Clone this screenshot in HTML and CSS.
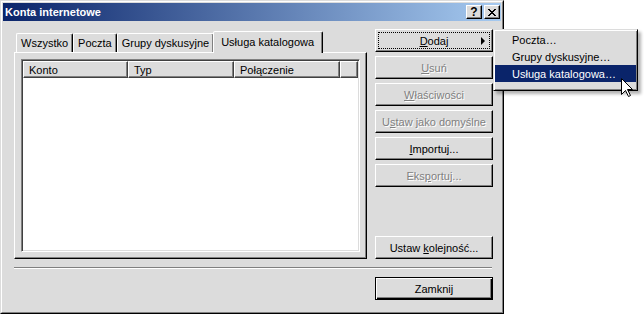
FILE: index.html
```html
<!DOCTYPE html>
<html lang="pl">
<head>
  <meta charset="UTF-8">
  <title>Konta internetowe</title>
  <link rel="stylesheet" href="styles.css">
</head>
<body>
  <div class="desk">
    <div class="window">
      <div class="frame">
        <div class="titlebar">
          <span class="title">Konta internetowe</span>
          <div class="caption-btns">
            <button class="cap-btn help">?</button>
            <button class="cap-btn">
              <svg width="8" height="7" viewBox="0 0 8 7" shape-rendering="crispEdges">
                <path d="M0 0h2v1H0z M6 0h2v1H6z M1 1h2v1H1z M5 1h2v1H5z M2 2h4v1H2z M3 3h2v1H3z M2 4h4v1H2z M1 5h2v1H1z M5 5h2v1H5z M0 6h2v1H0z M6 6h2v1H6z" fill="#000"/>
              </svg>
            </button>
          </div>
        </div>

        <div class="client">
          <div class="main-row">
            <div class="left-col">
              <div class="tabs">
                <div class="tab">Wszystko</div>
                <div class="tab">Poczta</div>
                <div class="tab">Grupy dyskusyjne</div>
                <div class="tab active">Usługa katalogowa</div>
              </div>
              <div class="panel">
                <div class="listview">
                  <div class="lv-header">
                    <div class="col col-konto">Konto</div>
                    <div class="col col-typ">Typ</div>
                    <div class="col col-conn">Połączenie</div>
                    <div class="col col-fill"></div>
                  </div>
                  <div class="lv-body"></div>
                </div>
              </div>
            </div>

            <div class="right-col">
              <button class="btn focused"><span><u>D</u>odaj</span><span class="arrow"></span></button>
              <button class="btn" disabled><span><u>U</u>suń</span></button>
              <button class="btn" disabled><span><u>W</u>łaściwości</span></button>
              <button class="btn" disabled><span>U<u>s</u>taw jako domyślne</span></button>
              <button class="btn"><span><u>I</u>mportuj...</span></button>
              <button class="btn" disabled><span>Eks<u>p</u>ortuj...</span></button>
              <button class="btn last"><span>Ustaw <u>k</u>olejność...</span></button>
            </div>
          </div>

          <div class="separator"></div>

          <div class="bottom-row">
            <button class="btn default"><span>Zamknij</span></button>
          </div>
        </div>
      </div>
    </div>

    <!-- submenu of "Dodaj" -->
    <div class="menu">
      <div class="menu-item">Poczta…</div>
      <div class="menu-item">Grupy dyskusyjne…</div>
      <div class="menu-item active">Usługa katalogowa…</div>
    </div>

    <svg class="cursor" width="13" height="20" viewBox="0 0 13 20">
      <path d="M0.5 0.5 L0.5 16.5 L4.5 12.5 L7.5 18.5 L9.5 17.5 L6.5 11.5 L11.5 11.5 Z" fill="#fff" stroke="#000" stroke-width="1"/>
    </svg>
  </div>
</body>
</html>
```

FILE: styles.css
```css
body {
  margin: 0;
  background: #fff;
  font-family: "Liberation Sans", Arial, sans-serif;
  font-size: 11px;
  color: #000;
}
.desk {
  position: relative;
  width: 644px;
  height: 314px;
}
.window {
  width: 504px;
  height: 314px;
  box-sizing: border-box;
  border: 1px solid;
  border-color: #dcdcdc #000 #000 #dcdcdc;
  background: #dcdcdc;
}
.frame {
  height: 100%;
  box-sizing: border-box;
  border: 1px solid;
  border-color: #fff #808080 #808080 #fff;
  padding: 1px;
  display: flex;
  flex-direction: column;
}

/* title bar */
.titlebar {
  height: 18px;
  display: flex;
  align-items: center;
  padding: 0 1px 0 2px;
  background: linear-gradient(to right, #0a246a, #a6caf0);
  color: #fff;
  font-weight: bold;
}
.caption-btns {
  margin-left: auto;
  display: flex;
  gap: 2px;
}
.cap-btn {
  width: 16px;
  height: 14px;
  box-sizing: border-box;
  padding: 0;
  border: 1px solid;
  border-color: #fff #000 #000 #fff;
  box-shadow: inset -1px -1px #808080;
  background: #dcdcdc;
  display: flex;
  align-items: center;
  justify-content: center;
}
.cap-btn.help {
  font: bold 12px "Liberation Sans", Arial, sans-serif;
  color: #000;
  line-height: 12px;
}

/* client area */
.client {
  flex: 1;
  display: flex;
  flex-direction: column;
  margin-top: 1px;
  padding: 7px 8px 0 11px;
}
.main-row {
  display: flex;
  gap: 8px;
  height: 230px;
}
.left-col {
  flex: 1;
  display: flex;
  flex-direction: column;
}

/* tabs */
.tabs {
  display: flex;
  align-items: flex-end;
  height: 23px;
  padding-left: 2px;
}
.tab {
  height: 19px;
  box-sizing: border-box;
  padding: 0 4px;
  border: 1px solid;
  border-bottom: none;
  border-color: #fff #000 transparent #fff;
  border-radius: 2px 2px 0 0;
  box-shadow: inset -1px 0 #808080;
  display: flex;
  align-items: center;
  white-space: nowrap;
}
.tab.active {
  position: relative;
  z-index: 1;
  height: 22px;
  margin: 0 -2px -1px -1px;
  padding: 0 8px 2px 7px;
  background: #dcdcdc;
}

.panel {
  flex: 1;
  display: flex;
  box-sizing: border-box;
  border: 1px solid;
  border-color: #fff #000 #000 #fff;
  box-shadow: inset -1px -1px #808080;
  padding: 6px;
}

/* list view */
.listview {
  flex: 1;
  display: flex;
  flex-direction: column;
  border: 1px solid;
  border-color: #808080 #fff #fff #808080;
  box-shadow: inset 1px 1px #404040, inset -1px -1px #dcdcdc;
  padding: 1px;
  background: #fff;
}
.lv-header {
  display: flex;
  height: 17px;
}
.col {
  box-sizing: border-box;
  border: 1px solid;
  border-color: #fff #404040 #404040 #fff;
  box-shadow: inset -1px -1px #808080;
  background: #dcdcdc;
  padding: 0 5px;
  display: flex;
  align-items: center;
  white-space: nowrap;
}
.col-konto { width: 105px; }
.col-typ { width: 106px; }
.col-conn { width: 106px; }
.col-fill { flex: 1; }
.lv-body {
  flex: 1;
}

/* buttons */
.right-col {
  width: 118px;
  display: flex;
  flex-direction: column;
  gap: 4px;
}
.btn {
  height: 23px;
  box-sizing: border-box;
  padding: 0;
  font: 11px "Liberation Sans", Arial, sans-serif;
  color: #000;
  background: #dcdcdc;
  border: 1px solid;
  border-color: #fff #000 #000 #fff;
  box-shadow: inset -1px -1px #808080;
  display: flex;
  align-items: center;
  justify-content: center;
  position: relative;
  white-space: nowrap;
}
.btn:disabled {
  color: #808080;
  text-shadow: 1px 1px #fff;
}
.btn.focused {
  outline: 1px dotted #000;
  outline-offset: -4px;
}
.btn .arrow {
  position: absolute;
  right: 7px;
  top: 7px;
  width: 0;
  height: 0;
  border-top: 4px solid transparent;
  border-bottom: 4px solid transparent;
  border-left: 4px solid #000;
}
.btn.last {
  margin-top: auto;
}
.btn.default {
  width: 118px;
  border-color: #000;
  box-shadow: inset 1px 1px #fff, inset -1px -1px #000, inset -2px -2px #808080;
}

.separator {
  margin-top: 8px;
  margin-right: 1px;
  border-top: 1px solid #808080;
  border-bottom: 1px solid #fff;
}
.bottom-row {
  display: flex;
  justify-content: flex-end;
  margin-top: 8px;
}

/* popup menu */
.menu {
  position: absolute;
  left: 493px;
  top: 29px;
  width: 145px;
  height: 62px;
  box-sizing: border-box;
  padding: 1px;
  background: #dcdcdc;
  border: 1px solid;
  border-color: #dcdcdc #000 #000 #dcdcdc;
  box-shadow: inset 1px 1px #fff, inset -1px -1px #808080, 3px 3px 3px rgba(0, 0, 0, 0.3);
}
.menu-item {
  height: 17px;
  padding-left: 17px;
  display: flex;
  align-items: center;
  white-space: nowrap;
}
.menu-item.active {
  background: #0a246a;
  color: #fff;
}

.cursor {
  position: absolute;
  left: 621px;
  top: 78px;
}
```
